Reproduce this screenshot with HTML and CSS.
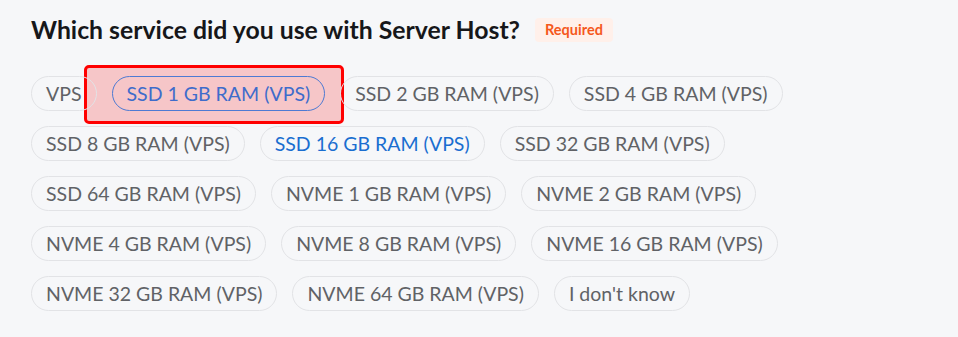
FILE: index.html
```html
<!DOCTYPE html>
<html lang="en">
<head>
<meta charset="utf-8">
<title>Which service did you use with Server Host?</title>
<link rel="stylesheet" href="styles.css">
</head>
<body>
<div class="question">
  <div class="question-head">
    <h2 class="question-title">Which service did you use with Server Host?</h2>
    <span class="badge-required">Required</span>
  </div>
  <div class="chips">
    <span class="chip">VPS</span>
    <span class="chip chip-selected">SSD 1 GB RAM (VPS)</span>
    <span class="chip">SSD 2 GB RAM (VPS)</span>
    <span class="chip">SSD 4 GB RAM (VPS)</span>
    <span class="chip">SSD 8 GB RAM (VPS)</span>
    <span class="chip chip-hover">SSD 16 GB RAM (VPS)</span>
    <span class="chip">SSD 32 GB RAM (VPS)</span>
    <span class="chip">SSD 64 GB RAM (VPS)</span>
    <span class="chip">NVME 1 GB RAM (VPS)</span>
    <span class="chip">NVME 2 GB RAM (VPS)</span>
    <span class="chip">NVME 4 GB RAM (VPS)</span>
    <span class="chip">NVME 8 GB RAM (VPS)</span>
    <span class="chip">NVME 16 GB RAM (VPS)</span>
    <span class="chip">NVME 32 GB RAM (VPS)</span>
    <span class="chip">NVME 64 GB RAM (VPS)</span>
    <span class="chip">I don't know</span>
  </div>
</div>
</body>
</html>
```
FILE: styles.css
```css
html {
  background: #f6f7f9;
}
body {
  margin: 0;
  padding: 0;
  font-family: Lato, "Open Sans", sans-serif;
  color: #1b1c1f;
}
.question {
  padding: 16px 31px 0 31px;
}
.question-head {
  display: flex;
  align-items: center;
  gap: 15px;
}
.question-title {
  margin: 0;
  font-size: 24.8px;
  font-weight: 700;
  line-height: 28px;
  color: #16171a;
}
.badge-required {
  background: #fff0ea;
  color: #f5581c;
  font-weight: 700;
  font-size: 14.5px;
  line-height: 24px;
  padding: 0 10px;
  border-radius: 4px;
}
.chips {
  display: flex;
  flex-wrap: wrap;
  gap: 15px 15px;
  margin-top: 32px;
  max-width: 800px;
}
.chip {
  position: relative;
  display: inline-block;
  font-size: 19.5px;
  line-height: 25px;
  padding: 4px 14px;
  border: 1px solid #e2e3e6;
  border-radius: 18px;
  color: #606266;
  white-space: nowrap;
}
.chip-selected {
  border-color: #4d7ad3;
  color: #3e6ccb;
}
.chip-selected::after {
  content: "";
  position: absolute;
  z-index: -1;
  top: -12px;
  bottom: -14px;
  left: -29px;
  right: -20px;
  border: 3px solid #ff0000;
  border-radius: 5px;
  background: #f6c6c8;
}
.chip-hover {
  color: #1a6ed0;
}
```
